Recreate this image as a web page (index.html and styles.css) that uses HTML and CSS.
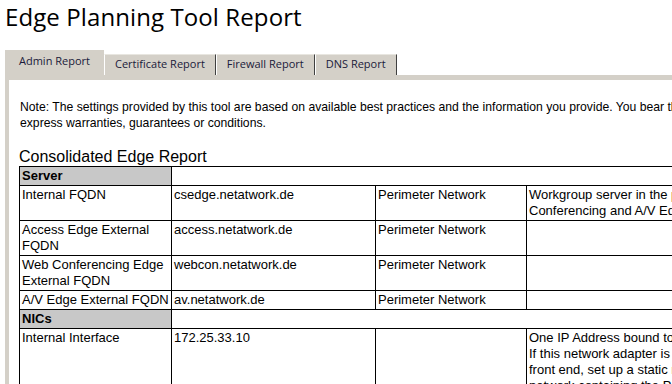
FILE: index.html
```html
<!DOCTYPE html>
<html lang="en">
<head>
  <meta charset="UTF-8" />
  <title>Edge Planning Tool Report</title>
  <link rel="stylesheet" href="styles.css">
</head>
<body>
  <h1 class="page-title">Edge Planning Tool Report</h1>

  <ul class="tabs">
    <li class="tab active">Admin Report</li>
    <li class="tab">Certificate Report</li>
    <li class="tab">Firewall Report</li>
    <li class="tab">DNS Report</li>
  </ul>

  <div class="panel">
    <p class="note">
      Note: The settings provided by this tool are based on available best practices and the information you provide. You bear the risk of using it. Microsoft gives no<br>
      express warranties, guarantees or conditions.
    </p>

    <h2 class="report-title">Consolidated Edge Report</h2>
    <table class="report">
      <colgroup>
        <col class="c-name">
        <col class="c-value">
        <col class="c-zone">
        <col class="c-notes">
      </colgroup>
      <tr class="section">
        <th>Server</th>
        <td colspan="3"></td>
      </tr>
      <tr>
        <td>Internal FQDN</td>
        <td>csedge.netatwork.de</td>
        <td>Perimeter Network</td>
        <td class="notes">Workgroup server in the perimeter network, hosting the Access, Web<br>Conferencing and A/V Edge Server roles.</td>
      </tr>
      <tr>
        <td>Access Edge External FQDN</td>
        <td>access.netatwork.de</td>
        <td>Perimeter Network</td>
        <td></td>
      </tr>
      <tr>
        <td>Web Conferencing Edge External FQDN</td>
        <td>webcon.netatwork.de</td>
        <td>Perimeter Network</td>
        <td></td>
      </tr>
      <tr>
        <td>A/V Edge External FQDN</td>
        <td>av.netatwork.de</td>
        <td>Perimeter Network</td>
        <td></td>
      </tr>
      <tr class="section">
        <th>NICs</th>
        <td colspan="3"></td>
      </tr>
      <tr>
        <td>Internal Interface</td>
        <td>172.25.33.10</td>
        <td></td>
        <td class="notes">One IP Address bound to the internal network adapter.<br>If this network adapter is not on the same subnet as the<br>front end, set up a static route to the internal<br>network containing the Pool servers.</td>
      </tr>
    </table>
  </div>
</body>
</html>
```

FILE: styles.css
```css
html {
  overflow: hidden;
}

body {
  margin: 0;
  padding: 0 0 0 5px;
  width: 1100px;
  overflow: hidden;
  background: #fff;
  color: #000;
  font-family: "Liberation Sans", Arial, sans-serif;
}

.page-title {
  margin: 0;
  padding-top: 1px;
  height: 49px;
  font-family: "Open Sans", sans-serif;
  font-size: 24px;
  font-weight: normal;
  line-height: 32px;
  letter-spacing: 0.1px;
}

/* tab strip */
.tabs {
  display: flex;
  align-items: flex-end;
  margin: 0;
  padding: 0;
  list-style: none;
  height: 25px;
}

.tab {
  font-family: "Open Sans", sans-serif;
  font-size: 11px;
  line-height: 18px;
  padding: 0 10px 2px;
  background: #d4d0c8;
  border-top: 1px solid #e8e6e0;
  border-left: 1px solid #fff;
  border-right: 1px solid #404040;
  color: #1a1a3a;
}

.tab.active {
  padding: 2px 13px 5px 14px;
  border: 0;
  border-right: 1px solid #d4d0c8;
}

.panel {
  border-top: 5px solid #d4d0c8;
  border-left: 4px solid #d4d0c8;
  padding: 19px 10px 0;
}

.note {
  margin: 0 0 0 1px;
  font-size: 12.2px;
  line-height: 16px;
}

.report-title {
  margin: 17px 0 0;
  font-size: 16px;
  font-weight: normal;
  line-height: 18px;
}

.report {
  border-collapse: collapse;
  border: 1px solid #000;
  font-size: 13px;
  line-height: 16px;
  table-layout: fixed;
  width: 900px;
}

.c-name { width: 152px; }
.c-value { width: 204px; }
.c-zone { width: 151px; }

.report td,
.report th {
  border: 1px solid #000;
  padding: 1px 2px;
  vertical-align: top;
  text-align: left;
}

.report .section th {
  background: #c8c8c8;
  font-weight: bold;
}

.report .notes {
  white-space: nowrap;
}
```
